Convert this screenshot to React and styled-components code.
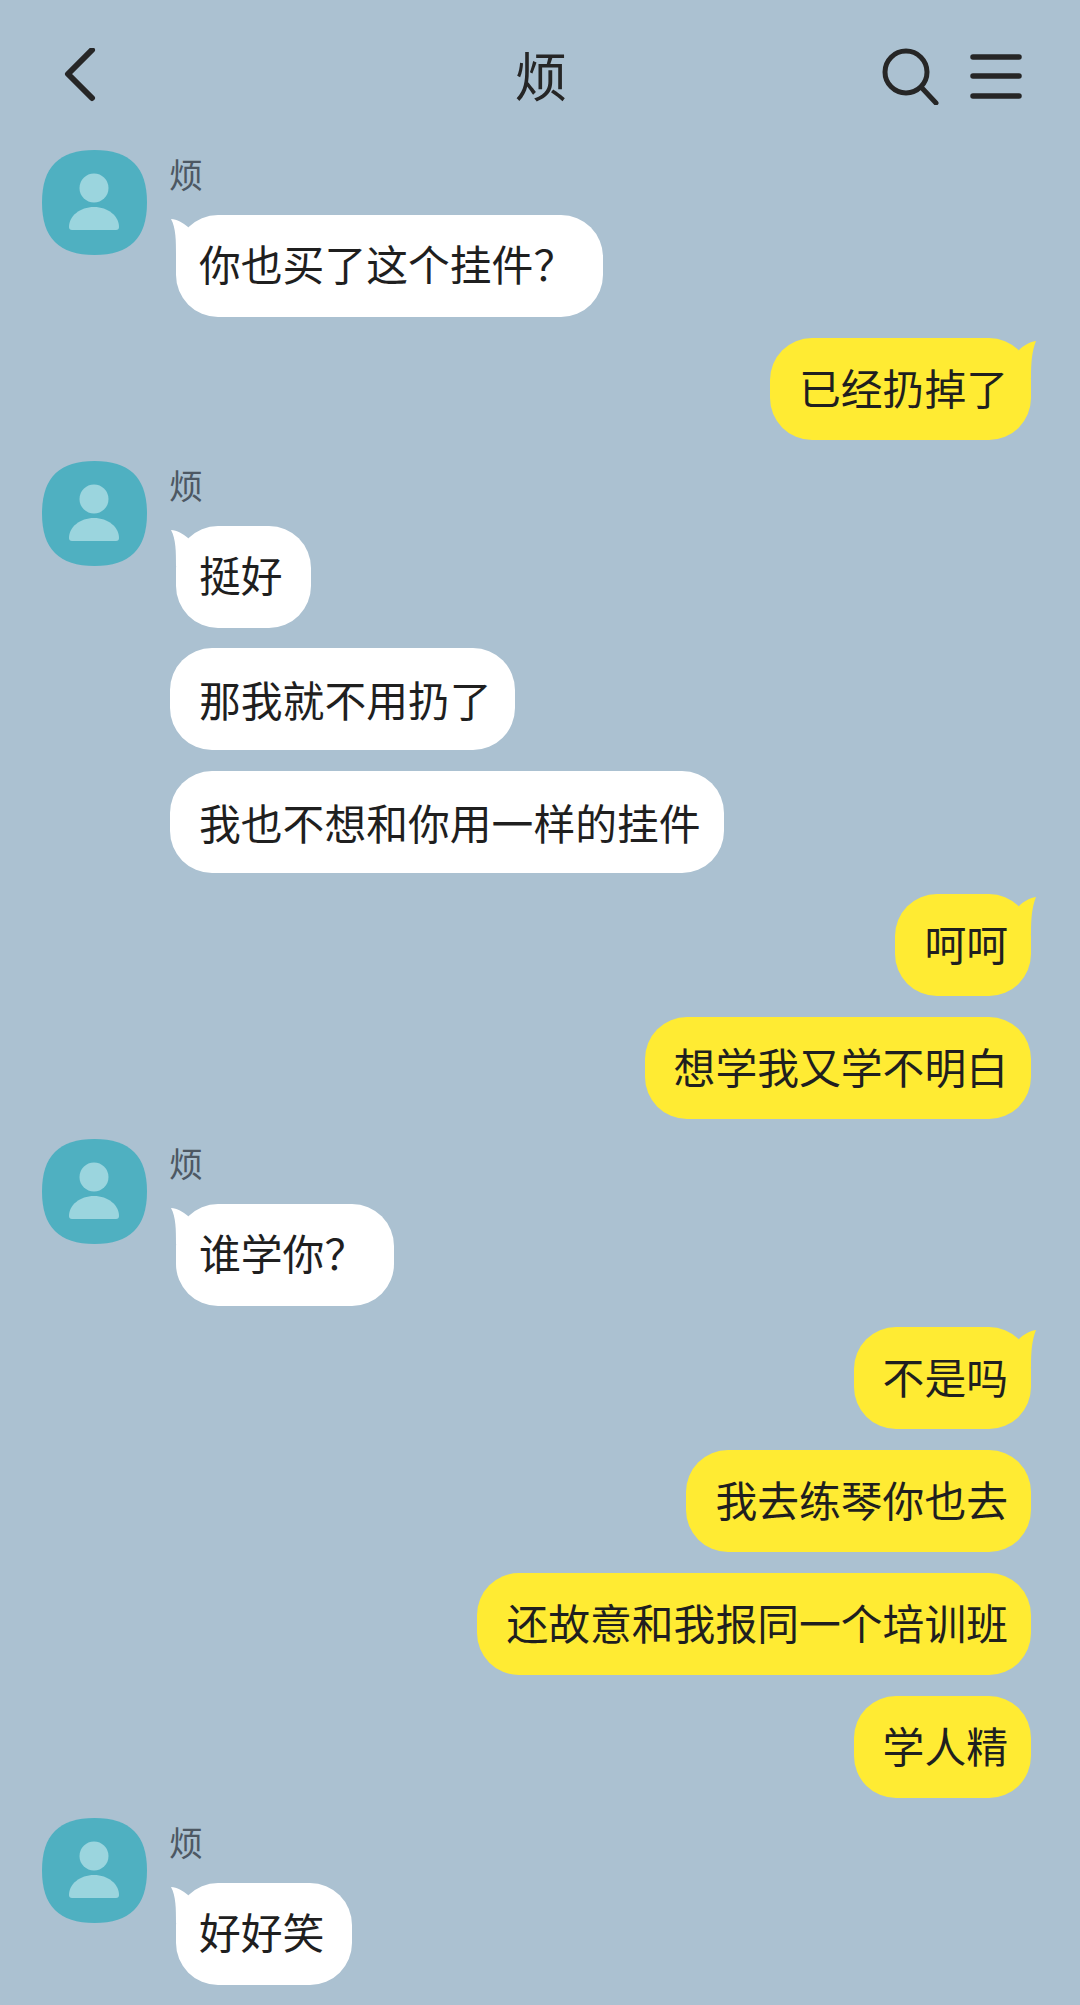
import React from 'react';
import styled, { createGlobalStyle } from 'styled-components';

const GlobalStyle = createGlobalStyle`
  html, body {
    margin: 0;
    padding: 0;
    background-color: #abc1d1;
  }
`;

const Page = styled.div`
  width: 1080px;
  height: 2005px;
  overflow: hidden;
  background-color: #abc1d1;
  font-family: "Noto Sans CJK SC", "Noto Sans", sans-serif;
  color: #1f1f1f;
`;

const Header = styled.header`
  display: grid;
  grid-template-columns: 1fr auto 1fr;
  align-items: center;
  height: 150px;
  padding: 0 58px 0 60px;
  box-sizing: border-box;
`;

const Title = styled.h1`
  margin: 0 0 2px;
  font-size: 53px;
  font-weight: 400;
  line-height: 1;
  color: #262626;
`;

const HeaderActions = styled.div`
  display: flex;
  justify-content: flex-end;
  align-items: center;
  gap: 29px;
`;

const IconSvg = styled.svg`
  display: block;
  margin-left: ${p => p.$inset || 0}px;
  fill: none;
  stroke: #262626;
  stroke-linecap: round;
  stroke-linejoin: round;
`;

const Messages = styled.main`
  display: flex;
  flex-direction: column;
  gap: 20.8px;
  padding: 0 49px 0 42px;
`;

const Group = styled.div`
  display: flex;
  gap: 23px;
`;

const AvatarSvg = styled.svg`
  display: block;
  flex: none;
  width: 105px;
  height: 105px;
`;

const Stack = styled.div`
  display: flex;
  flex-direction: column;
  align-items: flex-start;
  gap: 20.7px;
`;

const Name = styled.div`
  height: 65px;
  margin: 0 0 -20.7px -1px;
  font-size: 34px;
  line-height: 47px;
  color: #4d5863;
`;

const bubblePadding = p => {
  if (p.$mine) return '0 23px 0 29px';
  return p.$tail ? '0 28px 0 23px' : '0 23px 0 29px';
};

const bubbleLine = p => {
  if (p.$mine) return '98px';
  return p.$tail ? '96px' : '102px';
};

const Bubble = styled.div`
  position: relative;
  height: 102px;
  box-sizing: border-box;
  padding: ${bubblePadding};
  margin-left: ${p => (p.$tail && !p.$mine ? '6px' : '0')};
  border-radius: 42px;
  background-color: ${p => (p.$mine ? '#ffeb33' : '#ffffff')};
  font-size: 41.8px;
  line-height: ${bubbleLine};
  white-space: nowrap;
  align-self: ${p => (p.$mine ? 'flex-end' : 'flex-start')};
`;

const TailSvg = styled.svg`
  position: absolute;
  top: 0;
  width: 24px;
  height: 40px;
  fill: ${p => (p.$mine ? '#ffeb33' : '#ffffff')};
  ${p => (p.$mine ? 'right: -5px;' : 'left: -5px;')}
`;

const Tail = ({ mine }) => (
  <TailSvg $mine={mine} viewBox="0 0 24 40">
    {mine ? (
      <path d="M24 3 C17 4 11 8 7 12 L7 40 L19 40 C19 24 20 13 24 3 Z" />
    ) : (
      <path d="M0 4 C6 4 12 8 17 12 L17 40 L5 40 C5 26 5 13 0 4 Z" />
    )}
  </TailSvg>
);

const Avatar = () => (
  <AvatarSvg viewBox="0 0 105 105">
    <path
      fill="#4fb0c1"
      d="M52.500 0 C88 0 105 17 105 52.500 C105 88 88 105 52.500 105 C17 105 0 88 0 52.500 C0 17 17 0 52.500 0 Z"
    />
    <circle cx="52" cy="38" r="14.500" fill="#9bd5de" />
    <path
      fill="#9bd5de"
      d="M27 77 C27 66 38 57 52 57 C66 57 77 66 77 77 C77 79 76 80 74 80 L30 80 C28 80 27 79 27 77 Z"
    />
  </AvatarSvg>
);

const Mine = ({ text, tail }) => (
  <Bubble $mine $tail={tail}>
    {tail && <Tail mine />}
    {text}
  </Bubble>
);

const Theirs = ({ messages }) => (
  <Group>
    <Avatar />
    <Stack>
      <Name>烦</Name>
      {messages.map((text, i) => (
        <Bubble key={text} $tail={i === 0}>
          {i === 0 && <Tail />}
          {text}
        </Bubble>
      ))}
    </Stack>
  </Group>
);

const App = () => (
  <Page>
    <GlobalStyle />
    <Header>
      <IconSvg $inset={4} width="34" height="54" viewBox="0 0 34 54" strokeWidth="6">
        <path d="M28 2 L4 26 L28 50" />
      </IconSvg>
      <Title>烦</Title>
      <HeaderActions>
        <IconSvg width="60" height="60" viewBox="0 0 60 60" strokeWidth="5">
          <circle cx="25" cy="27" r="21" />
          <path d="M41 43 L55 58" />
        </IconSvg>
        <IconSvg width="52" height="48" viewBox="0 0 52 48" strokeWidth="5.500">
          <path d="M3 6 H49 M3 25 H49 M3 45 H49" />
        </IconSvg>
      </HeaderActions>
    </Header>
    <Messages>
      <Theirs messages={['你也买了这个挂件？']} />
      <Mine text="已经扔掉了" tail />
      <Theirs messages={['挺好', '那我就不用扔了', '我也不想和你用一样的挂件']} />
      <Mine text="呵呵" tail />
      <Mine text="想学我又学不明白" />
      <Theirs messages={['谁学你？']} />
      <Mine text="不是吗" tail />
      <Mine text="我去练琴你也去" />
      <Mine text="还故意和我报同一个培训班" />
      <Mine text="学人精" />
      <Theirs messages={['好好笑']} />
    </Messages>
  </Page>
);

export default App;
